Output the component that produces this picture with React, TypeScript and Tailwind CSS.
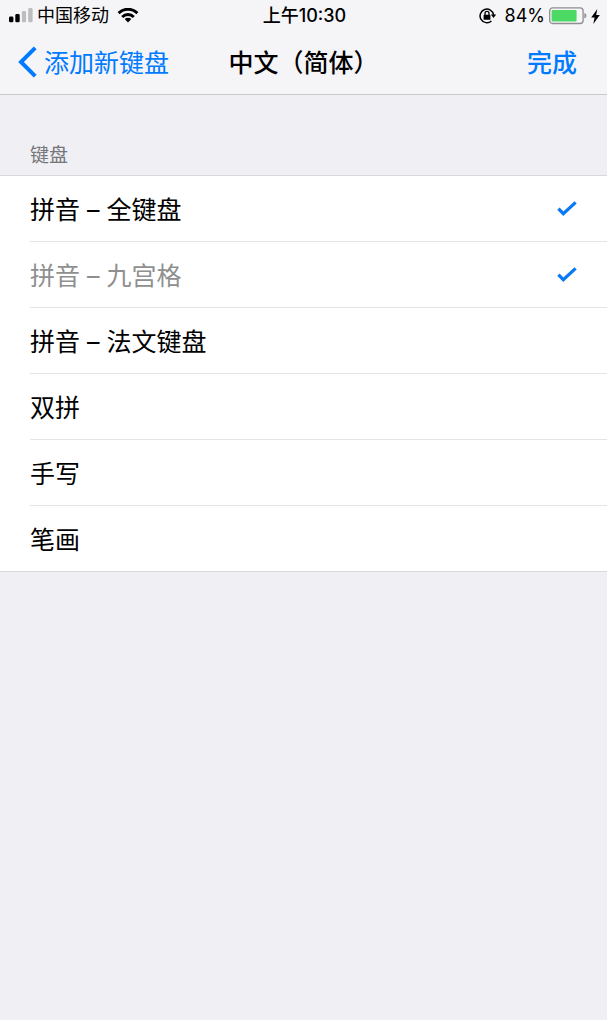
import React, { useState } from "react";

type Layout = {
  id: string;
  name: string;
  locked?: boolean;
};

const LAYOUTS: Layout[] = [
  { id: "qwerty", name: "拼音 – 全键盘" },
  { id: "ten-key", name: "拼音 – 九宫格", locked: true },
  { id: "azerty", name: "拼音 – 法文键盘" },
  { id: "shuangpin", name: "双拼" },
  { id: "handwriting", name: "手写" },
  { id: "stroke", name: "笔画" },
];

function SignalIcon() {
  return (
    <svg width="24" height="16" viewBox="0 0 24 16" aria-hidden="true">
      <rect x="0" y="8.5" width="4.4" height="5.8" rx="1.4" fill="#000" />
      <rect x="6.3" y="6" width="4.4" height="8.3" rx="1.4" fill="#000" />
      <rect x="12.9" y="3" width="4.2" height="11.3" rx="1.4" fill="#bdbdbf" />
      <rect x="19.2" y="0" width="4.4" height="14.3" rx="1.4" fill="#bdbdbf" />
    </svg>
  );
}

function WifiIcon() {
  return (
    <svg width="22" height="16" viewBox="0 0 22 16" aria-hidden="true">
      <g fill="none" stroke="#000" strokeWidth="2.9">
        <path d="M1.6 5.1a13.3 13.3 0 0 1 18.8 0" />
        <path d="M5.2 8.9a8.2 8.2 0 0 1 11.6 0" />
      </g>
      <path d="M11 14.4 7.7 11.1a4.7 4.7 0 0 1 6.6 0Z" fill="#000" />
    </svg>
  );
}

function RotationLockIcon() {
  return (
    <svg width="18" height="16" viewBox="0 0 18 16" aria-hidden="true">
      <path
        d="M14.6 6.8A6.8 6.8 0 1 0 12.4 13"
        fill="none"
        stroke="#000"
        strokeWidth="1.5"
      />
      <path d="M11.8 6.4h5.4l-2.7 3.6Z" fill="#000" />
      <rect x="4.6" y="6.8" width="6.8" height="5" rx="0.6" fill="#000" />
      <path
        d="M6 7.2V5.4a2 2 0 0 1 4 0v1.8"
        fill="none"
        stroke="#000"
        strokeWidth="1.3"
      />
    </svg>
  );
}

function BatteryIcon() {
  return (
    <svg width="38" height="18" viewBox="0 0 38 18" aria-hidden="true">
      <rect
        x="0.7"
        y="0.9"
        width="33.4"
        height="15.6"
        rx="3"
        fill="none"
        stroke="#8e8e93"
        strokeWidth="1.3"
      />
      <rect x="2.6" y="2.9" width="25" height="11.6" rx="1" fill="#4cd964" />
      <path d="M35.4 6c2.6.6 2.6 4.8 0 5.4Z" fill="#8e8e93" />
    </svg>
  );
}

function BoltIcon() {
  return (
    <svg width="9" height="15" viewBox="0 0 9 15" aria-hidden="true">
      <path d="M6.3 0 .2 8.4h3.4L2.3 15 8.8 6H5.2Z" fill="#000" />
    </svg>
  );
}

function CheckIcon() {
  return (
    <svg width="20" height="16" viewBox="0 0 20 16" aria-hidden="true">
      <path
        d="m1.4 7.7 4.9 4.9L18.6 1.4"
        fill="none"
        stroke="#0b79f3"
        strokeWidth="3.3"
      />
    </svg>
  );
}

function StatusBar() {
  return (
    <div className="grid h-8 grid-cols-[1fr_auto_1fr] items-center pr-[7px] pl-[9px] text-lg leading-6">
      <div className="flex items-center gap-1">
        <SignalIcon />
        <span>中国移动</span>
        <span className="pl-1">
          <WifiIcon />
        </span>
      </div>
      <time className="font-medium">上午10:30</time>
      <div className="flex items-center justify-end gap-1">
        <RotationLockIcon />
        <span className="pl-1">84%</span>
        <BatteryIcon />
        <BoltIcon />
      </div>
    </div>
  );
}

function NavBar() {
  return (
    <nav className="grid h-15 grid-cols-[1fr_auto_1fr] items-center px-4.5 text-[25px] leading-8">
      <button type="button" className="flex items-center gap-1.5 text-[#007aff]">
        <svg width="20" height="32" viewBox="0 0 20 32" aria-hidden="true">
          <path
            d="M17.2 1.8 3 16l14.2 14.2"
            fill="none"
            stroke="currentColor"
            strokeWidth="4"
          />
        </svg>
        <span className="pt-0.5">添加新键盘</span>
      </button>
      <h1 className="pt-0.5 font-medium">中文（简体）</h1>
      <button
        type="button"
        className="justify-self-end pt-0.5 pr-3 font-medium text-[#007aff]"
      >
        完成
      </button>
    </nav>
  );
}

export default function App() {
  const [selected, setSelected] = useState<string[]>(["qwerty", "ten-key"]);

  const toggle = (id: string) => {
    setSelected((prev) =>
      prev.includes(id) ? prev.filter((s) => s !== id) : [...prev, id]
    );
  };

  return (
    <div
      lang="zh-CN"
      className="min-h-screen bg-[#efeff4] font-['Inter','Noto_Sans_CJK_SC',sans-serif] text-black"
    >
      <header className="border-b border-[#c8c8cd] bg-[#f5f5f7] pb-0.5">
        <StatusBar />
        <NavBar />
      </header>

      <main>
        <h2 className="px-7.5 pt-[47px] pb-[5px] text-[19px] leading-7 text-[#75757a]">
          键盘
        </h2>
        <ul className="border-y border-[#d8d8dd] bg-white pl-7.5">
          {LAYOUTS.map((layout) => (
            <li
              key={layout.id}
              className="border-b border-[#e4e4e6] last:border-b-0"
            >
              <button
                type="button"
                disabled={layout.locked}
                aria-pressed={selected.includes(layout.id)}
                onClick={() => toggle(layout.id)}
                className="flex h-[65px] w-full items-center justify-between pr-7.5 text-left text-[25px] leading-8 disabled:text-[#8f8f8f]"
              >
                <span className="pt-0.5">{layout.name}</span>
                {selected.includes(layout.id) && <CheckIcon />}
              </button>
            </li>
          ))}
        </ul>
      </main>
    </div>
  );
}
